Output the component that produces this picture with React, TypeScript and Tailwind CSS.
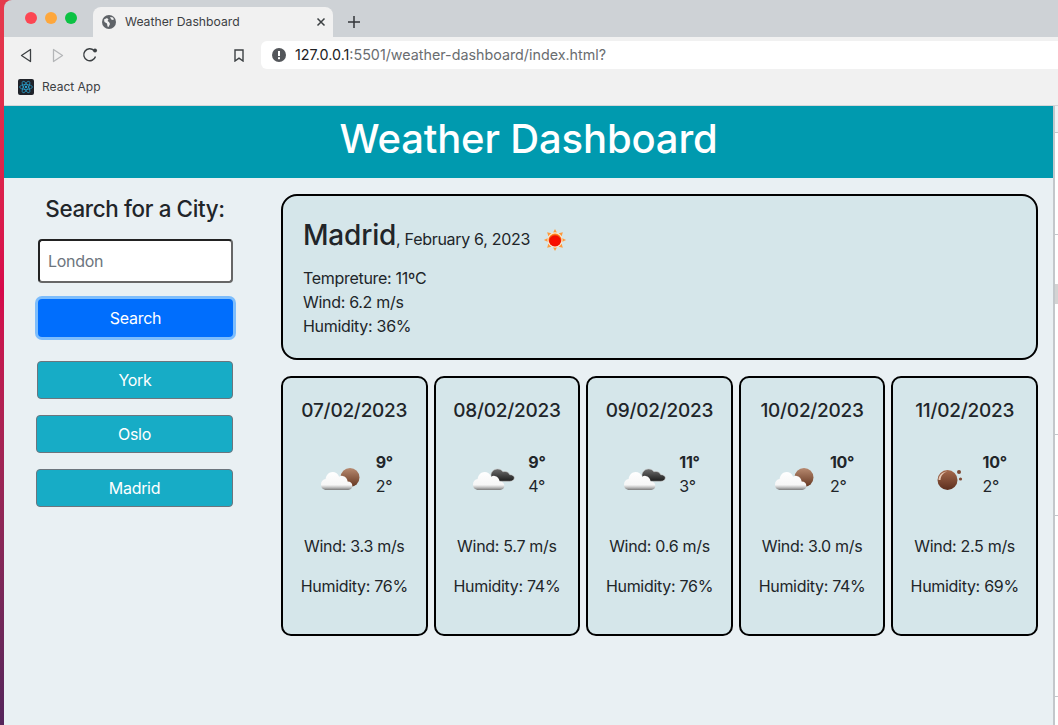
type IconKind = 'cloudSun' | 'cloudDark' | 'moon';

const forecast: { date: string; icon: IconKind; hi: string; lo: string; wind: string; humidity: string }[] = [
  { date: '07/02/2023', icon: 'cloudSun', hi: '9°', lo: '2°', wind: '3.3', humidity: '76' },
  { date: '08/02/2023', icon: 'cloudDark', hi: '9°', lo: '4°', wind: '5.7', humidity: '74' },
  { date: '09/02/2023', icon: 'cloudDark', hi: '11°', lo: '3°', wind: '0.6', humidity: '76' },
  { date: '10/02/2023', icon: 'cloudSun', hi: '10°', lo: '2°', wind: '3.0', humidity: '74' },
  { date: '11/02/2023', icon: 'moon', hi: '10°', lo: '2°', wind: '2.5', humidity: '69' },
];

function SunIcon() {
  return (
    <svg width="24" height="24" viewBox="0 0 26 26" className="shrink-0">
      <defs>
        <radialGradient id="sunCore" cx="50%" cy="60%" r="55%">
          <stop offset="0%" stopColor="#ff0a00" />
          <stop offset="75%" stopColor="#f01000" />
          <stop offset="100%" stopColor="#ff8a20" />
        </radialGradient>
      </defs>
      <g fill="#ff9a3c">
        <path d="M13 1l2 4h-4z" />
        <path d="M13 25l2-4h-4z" />
        <path d="M1 13l4-2v4z" />
        <path d="M25 13l-4-2v4z" />
        <path d="M4.5 4.5l4.5 1.2-3.2 3.2z" />
        <path d="M21.5 4.5l-4.5 1.2 3.2 3.2z" />
        <path d="M4.5 21.5l4.5-1.2-3.2-3.2z" />
        <path d="M21.5 21.5l-4.5-1.2 3.2-3.2z" />
      </g>
      <circle cx="13" cy="13" r="8" fill="#ffe6c8" />
      <circle cx="13" cy="13" r="7" fill="url(#sunCore)" />
    </svg>
  );
}

function WeatherIcon({ kind, id }: { kind: IconKind; id: string }) {
  if (kind === 'moon') {
    return (
      <svg width="50" height="50" viewBox="0 0 50 50" className="shrink-0">
        <defs>
          <linearGradient id={id} x1="0" y1="0" x2="0" y2="1">
            <stop offset="0%" stopColor="#a5694c" />
            <stop offset="100%" stopColor="#5c2f1e" />
          </linearGradient>
        </defs>
        <circle cx="24.5" cy="31" r="10" fill={`url(#${id})`} />
        <path d="M15.5 31c0-5 4-8.6 9-8.6-4 1-6.8 4-7 8.6z" fill="#e8c8b4" />
        <circle cx="36" cy="23" r="2" fill="#7d4a35" />
        <circle cx="37.5" cy="30" r="1.6" fill="#7d4a35" />
      </svg>
    );
  }
  const dark = kind === 'cloudDark';
  return (
    <svg width="50" height="50" viewBox="0 0 50 50" className="shrink-0">
      <defs>
        <linearGradient id={`${id}-cloud`} x1="0" y1="0" x2="0" y2="1">
          <stop offset="0%" stopColor="#ffffff" />
          <stop offset="72%" stopColor="#f6f6f6" />
          <stop offset="85%" stopColor="#c4c4c4" />
          <stop offset="100%" stopColor="#7c7c7c" />
        </linearGradient>
        <linearGradient id={id} x1="0" y1="0" x2="0" y2="1">
          <stop offset="0%" stopColor={dark ? '#6e6e6e' : '#b78a70'} />
          <stop offset="100%" stopColor={dark ? '#1c1c1c' : '#64351f'} />
        </linearGradient>
      </defs>
      {dark ? (
        <g transform="translate(-6 7) scale(1.53 1.35)">
          <path
            d="M19 15c-.4-3 1.8-5.4 4.2-5.4 1.6 0 2.8.8 3.5 2 2-.6 4 .4 4.5 2.2 1.8 0 3 1 3 2.3 0 1.6-1.3 2.6-3 2.6H24c-3 0-5-1.2-5-3.700z"
            fill={`url(#${id})`}
            stroke="#c9c9c9"
            strokeWidth="0.4"
          />
        </g>
      ) : (
        <circle cx="34" cy="28.5" r="9.5" fill={`url(#${id})`} />
      )}
      <g transform="translate(2.8 6.4) scale(1.1 1.28)">
        <path
          d="M7 27c-3.2 0-5-1.8-5-4.3 0-2.4 1.8-4 4.2-4.2.4-3.4 3.2-5.6 6.3-5.6 2.8 0 5 1.5 6 3.8 1-.6 2-.8 3-.7 2.7.2 4.5 2.2 4.7 4.4 2.8.1 4.3 1.3 4.3 3.4 0 2-1.5 3.2-3.7 3.2z"
          fill={`url(#${id}-cloud)`}
        />
      </g>
    </svg>
  );
}

function BrowserChrome() {
  return (
    <div className="shrink-0 overflow-hidden rounded-tl-[8px] tracking-normal">
      {/* Tabs */}
      <div className="flex h-[37px] items-end bg-[#ced2d6] pl-[21px]">
        <div className="mb-[13px] flex gap-[8px] self-end">
          <span className="h-3 w-3 rounded-full bg-[#fc4653]" />
          <span className="h-3 w-3 rounded-full bg-[#fea73c]" />
          <span className="h-3 w-3 rounded-full bg-[#0cc244]" />
        </div>
        <div className="ml-[16px] flex h-[30px] w-[240px] items-center rounded-t-lg bg-[#f1f1f1] pl-[9px] pr-[7px]">
          <svg width="14" height="14" viewBox="0 0 14 14" className="shrink-0">
            <circle cx="7" cy="7" r="7" fill="#5f6368" />
            <path d="M2 4.5l3-1.5 1.5 1.5-1 1.5 1.5 1 1 2-1.5 3-1-.5-.5-3-2.5-1.5zM8 2l3 .5 1 2-2 .5-1-1z" fill="#f1f1f1" />
          </svg>
          <span className="ml-[9px] flex-1 text-[12.2px] leading-none text-[#3c4043]">Weather Dashboard</span>
          <svg width="10" height="10" viewBox="0 0 10 10" className="shrink-0">
            <path d="M1.5 1.5l7 7M8.5 1.5l-7 7" stroke="#3c4043" strokeWidth="1.5" />
          </svg>
        </div>
        <svg width="12" height="12" viewBox="0 0 12 12" className="mb-[9px] ml-[15px] shrink-0">
          <path d="M6 0v12M0 6h12" stroke="#33363a" strokeWidth="1.5" />
        </svg>
      </div>

      {/* Toolbar */}
      <div className="flex h-[32px] items-start bg-[#f1f1f1] pt-[4px]">
        <div className="flex h-[28px] w-[257px] shrink-0 items-center pl-[16px]">
          <svg width="12" height="15" viewBox="0 0 12 15">
            <path d="M10.5 1.5v12L1.5 7.5z" fill="none" stroke="#3c4043" strokeWidth="1.3" strokeLinejoin="round" />
          </svg>
          <svg width="12" height="15" viewBox="0 0 12 15" className="ml-[20px]">
            <path d="M1.5 1.5v12l9-6z" fill="none" stroke="#b4b6b8" strokeWidth="1.3" strokeLinejoin="round" />
          </svg>
          <svg width="16" height="16" viewBox="0 0 16 16" className="ml-[18px]">
            <path d="M13.5 9.5A6 6 0 1 1 12 3.5" fill="none" stroke="#3c4043" strokeWidth="1.4" />
            <circle cx="13" cy="3.5" r="2" fill="#3c4043" />
          </svg>
          <svg width="10" height="13" viewBox="0 0 10 13" className="ml-[136px]">
            <path d="M1 1h8v11L5 9.2 1 12z" fill="none" stroke="#3c4043" strokeWidth="1.4" />
          </svg>
        </div>
        <div className="flex h-[28px] flex-1 items-center rounded-l-md bg-white pl-[11px]">
          <svg width="14" height="14" viewBox="0 0 14 14" className="shrink-0">
            <circle cx="7" cy="7" r="7" fill="#53565a" />
            <rect x="6" y="3" width="2" height="5" fill="#fff" />
            <rect x="6" y="9.2" width="2" height="2" fill="#fff" />
          </svg>
          <span className="ml-[9px] text-[14.3px] leading-none text-[#6a6d70]">
            <span className="text-[#202124]">127.0.0.1</span>:5501/weather-dashboard/index.html?
          </span>
        </div>
      </div>

      {/* Bookmarks */}
      <div className="flex h-[37px] items-center border-b border-[#d4d6d8] bg-[#f1f1f1] pl-[14px]">
        <span className="flex h-4 w-4 items-center justify-center rounded-[2px] bg-[#20232a]">
          <svg width="14" height="14" viewBox="-12 -12 24 24" fill="none" stroke="#2aa9d8" strokeWidth="1.2">
            <circle r="2" fill="#2aa9d8" stroke="none" />
            <ellipse rx="11" ry="4.2" />
            <ellipse rx="11" ry="4.2" transform="rotate(60)" />
            <ellipse rx="11" ry="4.2" transform="rotate(120)" />
          </svg>
        </span>
        <span className="ml-[8px] text-[12px] leading-none text-[#3c4043]">React App</span>
      </div>
    </div>
  );
}

function Sidebar() {
  return (
    <aside className="w-[277px] shrink-0 pt-[16px]">
      <h2 className="w-[262px] text-center text-[22.4px] font-[550] leading-[29px] tracking-[-0.35px] text-[#212529]">
        Search for a City:
      </h2>
      <input
        placeholder="London"
        className="ml-[34px] mt-[16px] block h-[44px] w-[195px] rounded-[4px] border-2 border-t-[#222] border-l-[#222] border-r-[#666] border-b-[#666] bg-white px-2 text-[16px] text-[#212529] outline-none placeholder:text-[#6c757d]"
      />
      <button className="ml-[34px] mt-[16px] block h-[38px] w-[195px] rounded-[4px] bg-[#006efd] text-[16px] text-white ring-[3px] ring-[#7dbdfc]">
        Search
      </button>
      <div className="mt-[24px] flex flex-col gap-[16px]">
        {['York', 'Oslo', 'Madrid'].map((city, i) => (
          <button
            key={city}
            className={`block h-[38px] rounded-[4px] border border-[#6c757d] bg-[#17acc6] text-[16px] text-white ${i === 0 ? 'ml-[33px] w-[196px]' : 'ml-[32px] w-[197px]'}`}
          >
            {city}
          </button>
        ))}
      </div>
    </aside>
  );
}

function ForecastCard({ day, index }: { day: (typeof forecast)[number]; index: number }) {
  return (
    <div className="flex h-[260px] flex-1 flex-col items-center rounded-[10px] border-2 border-black bg-[#d5e6ea] pt-[21px] text-[#212529]">
      <h5 className="text-[19px] font-medium leading-[24px] tracking-[-0.25px]">{day.date}</h5>
      <div className="mt-[26px] flex h-[50px] items-center">
        <WeatherIcon kind={day.icon} id={`icon${index}`} />
        <div className="ml-[10px] text-[16px] leading-[24px]">
          <div className="font-bold">{day.hi}</div>
          <div>{day.lo}</div>
        </div>
      </div>
      <p className="mt-[35px] text-[16px] leading-[24px]">Wind: {day.wind} m/s</p>
      <p className="mt-[16px] text-[16px] leading-[24px]">Humidity: {day.humidity}%</p>
    </div>
  );
}

function Dashboard() {
  return (
    <main className="flex-1 pr-[15px] pt-[16px]">
      {/* Current weather */}
      <section className="h-[166px] rounded-[16px] border-2 border-black bg-[#d5e6ea] pl-[20px] pt-[21px] text-[#212529]">
        <div className="flex h-[36px] items-center">
          <span className="text-[28px] font-[550] leading-[36px] tracking-[-0.2px]">Madrid</span>
          <span className="mt-[8px] text-[16px] leading-[24px]">, February 6, 2023</span>
          <span className="ml-[13px] mt-[10px] flex">
            <SunIcon />
          </span>
        </div>
        <p className="mt-[13px] text-[16px] leading-[24px]">Tempreture: 11ºC</p>
        <p className="text-[16px] leading-[24px]">Wind: 6.2 m/s</p>
        <p className="text-[16px] leading-[24px]">Humidity: 36%</p>
      </section>

      {/* 5 day forecast */}
      <section className="mt-[16px] flex gap-[6px]">
        {forecast.map((day, i) => (
          <ForecastCard key={day.date} day={day} index={i} />
        ))}
      </section>
    </main>
  );
}

export default function App() {
  return (
    <div className="flex h-[725px] w-[1058px] overflow-hidden bg-[#e33a4a] font-['Inter','Liberation_Sans',sans-serif] tracking-[-0.3px]">
      {/* desktop wallpaper peeking out left of the window */}
      <div className="w-[4px] shrink-0 bg-gradient-to-b from-[#e63a4c] via-[#d6084a] via-40% to-[#55245a]" />

      <div className="flex min-w-0 flex-1 flex-col">
        <BrowserChrome />
        <div className="flex min-h-0 flex-1">
          <div className="flex w-[1049px] shrink-0 flex-col">
            <header className="flex h-[72px] shrink-0 items-center justify-center bg-[#009aaf] pb-[6px]">
              <h1 className="text-[40px] font-[550] leading-[48px] tracking-[-0.15px] text-white">Weather Dashboard</h1>
            </header>
            <div className="flex flex-1 bg-[#e9f0f3]">
              <Sidebar />
              <Dashboard />
            </div>
          </div>

          {/* window behind on the right */}
          <div className="flex flex-1 flex-col border-l-2 border-[#c3c7cb] bg-white">
            <div className="h-[26px] shrink-0 bg-[#eef2f4]" />
            <div className="h-[102px] shrink-0 border-t border-[#c3c7cb]" />
            <div className="h-[200px] shrink-0 border-t border-[#c3c7cb] pt-[49px]">
              <div className="h-[20px] bg-[#d3d3d3]" />
            </div>
            <div className="h-[81px] shrink-0 border-t border-[#c3c7cb]" />
            <div className="h-[181px] shrink-0 border-t border-[#c3c7cb]" />
            <div className="flex-1 border-t border-[#c3c7cb]" />
          </div>
        </div>
      </div>
    </div>
  );
}
